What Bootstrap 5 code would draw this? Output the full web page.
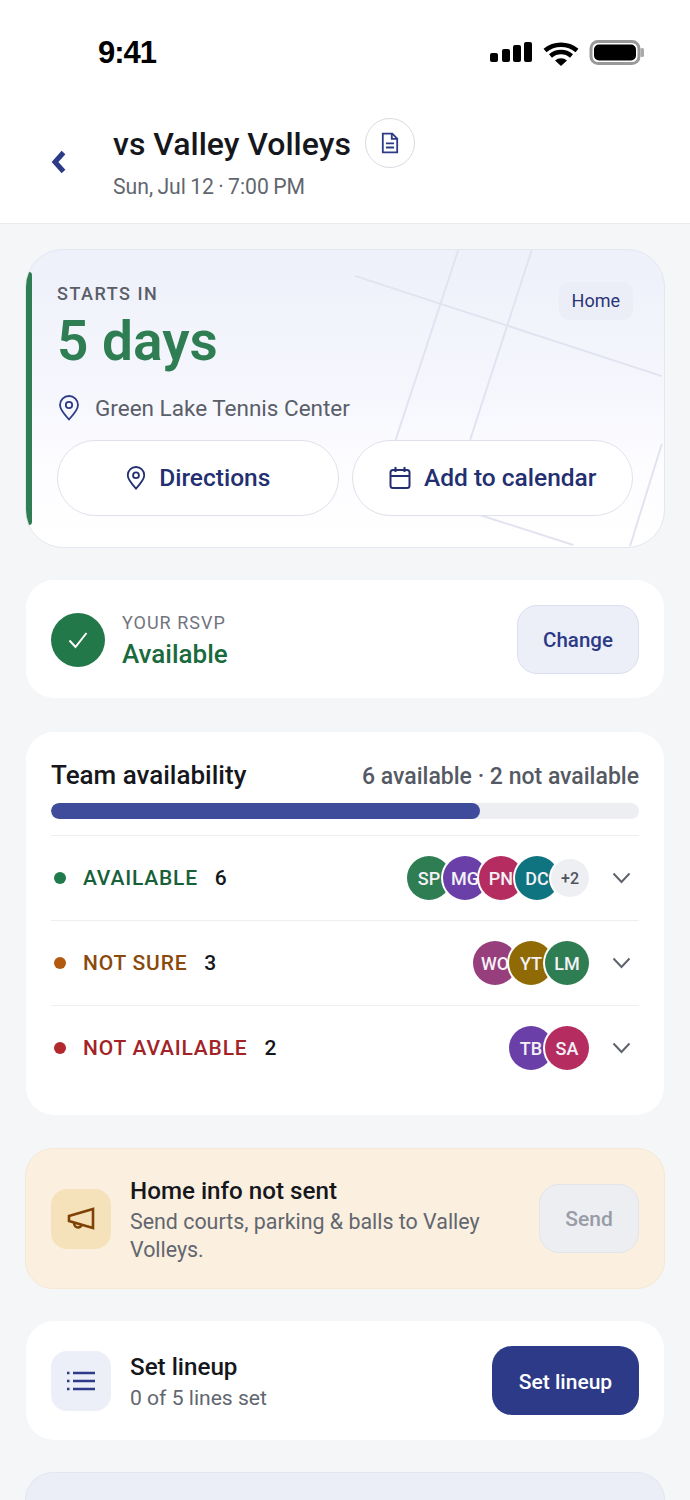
<!DOCTYPE html>
<html lang="en">
<head>
  <meta charset="UTF-8">
  <title>vs Valley Volleys</title>
  <meta name="viewport" content="width=device-width, initial-scale=1">
  <link href="https://cdn.jsdelivr.net/npm/bootstrap@5.3.3/dist/css/bootstrap.min.css" rel="stylesheet">
  <style>
    html, body { height: 1500px; overflow: hidden; }
    body { background: #f4f6f8; font-family: Roboto, "Liberation Sans", sans-serif; color: #15171c; }

    .status-bar { height: 100px; background: #fff; padding: 33px 46px 0 98px; }
    .status-time { font-family: "Liberation Sans", sans-serif; font-weight: 700; font-size: 31px; line-height: 40px; color: #000; letter-spacing: -1px; }
    .status-icons { margin-top: 7px; }

    .top-head { height: 124px; background: #fff; border-bottom: 1px solid #e9ebef; padding: 18px 0 0 51px; }
    .back-btn { width: 62px; padding-top: 31px; }
    .head-title { font-size: 32px; line-height: 50px; font-weight: 500; padding-top: 1px; }
    .head-sub { font-size: 21.200px; line-height: 26px; color: #62666f; margin-top: 5px; word-spacing: -1px; }
    .doc-btn { width: 50px; height: 50px; border: 1px solid #d9dbe1; border-radius: 50%; background: #fff; margin-left: 14px; }

    .page-main { padding: 25px 26px 0; }
    .panel { background: #fff; border: 0; border-radius: 28px; margin-bottom: 33px; }

    .hero { height: 299px; margin: 0 -1px 32px; border: 1px solid #e5e7f0; border-radius: 38px; overflow: hidden; padding: 0 31px;
      background: linear-gradient(180deg, #eef0fa 0%, #f6f7fd 50%, #fcfcff 70%, #fff 100%); }
    .hero-lines { position: absolute; left: 0; top: 0; width: 100%; height: 100%; }
    .hero-bar { position: absolute; left: 0; top: 22px; bottom: 22px; width: 6px; border-radius: 3px; background: #2f7d52; }
    .hero-inner { position: relative; }
    .hero-label { font-size: 18px; line-height: 22px; letter-spacing: 1.500px; font-weight: 500; color: #5a5e68; margin-top: 33px; }
    .hero-count { font-size: 55px; line-height: 62px; font-weight: 600; color: #2f7d52; margin-top: 5px; }
    .hero-place { font-size: 22.500px; line-height: 30px; color: #5a5e68; margin-top: 21px; gap: 14px; }
    .home-tag { position: absolute; right: 0; top: 32px; background: #eceef7; color: #2a3577; font-size: 18px; line-height: 38px; padding: 0 13px; border-radius: 10px; }
    .pill-btn { flex: 1 1 0; height: 76px; border: 1px solid #dfe1ea; border-radius: 38px; background: #fff; color: #232f70; font-size: 24.500px; font-weight: 500; gap: 12px; }
    .pill-row { gap: 13px; margin-top: 17px; }

    .rsvp { height: 118px; padding: 0 25px; margin-bottom: 34px; }
    .rsvp-check { width: 54px; height: 54px; border-radius: 50%; background: #23784a; margin: 1px 17px 0 0; }
    .rsvp-label { font-size: 18px; line-height: 24px; letter-spacing: 1px; color: #72757e; padding-top: 2px; }
    .rsvp-value { font-size: 26px; line-height: 32px; font-weight: 500; color: #1b6a3e; margin-top: 3px; }
    .soft-btn { width: 122px; height: 69px; border: 1px solid #dcdef0; border-radius: 20px; background: #eceef8; color: #2c3a86; font-size: 20.500px; font-weight: 500; padding-top: 3px; }

    .team { height: 383px; padding: 27px 25px 0; }
    .team-title { font-size: 26px; line-height: 32px; font-weight: 500; }
    .team-count { font-size: 23px; line-height: 36px; color: #555963; font-weight: 500; }
    .team-bar { height: 16px; background: #eceef2; border-radius: 8px; margin-top: 8px; margin-bottom: 16px; }
    .team-bar .progress-bar { background: #3f4c9c; border-radius: 8px; }
    .avail-row { height: 85px; border-top: 1px solid #eceef1; }
    .avail-dot { width: 12px; height: 12px; border-radius: 50%; margin: 0 17px 0 3px; }
    .avail-name { font-size: 21px; font-weight: 500; letter-spacing: .8px; padding-top: 2px; }
    .avail-num { font-size: 21px; font-weight: 500; margin-left: 17px; padding-top: 2px; }
    .avatars { margin-left: auto; }
    .avatar { width: 44px; height: 44px; border-radius: 50%; color: #f4f1f6; font-size: 18px; font-weight: 500; margin-left: -8px; box-shadow: 0 0 0 2px #fff; overflow: hidden; white-space: nowrap; padding-top: 1px; }
    .avatar-more { width: 38px; height: 38px; background: #eeeff3; color: #4e525c; font-size: 16px; }
    .chev { width: 19px; margin-left: 23px; margin-right: 8px; }

    .notice { height: 141px; margin: 0 -1px 32px; padding: 0 25px; background: #fbf0df; border: 1px solid #f5e8d4; }
    .notice-text { padding-top: 3px; }
    .lineup { height: 119px; padding: 0 25px; margin-bottom: 32px; }
    .lineup-text { padding-top: 2px; }
    .lineup-text .item-sub { font-size: 21.100px; }
    .tile { width: 60px; height: 60px; border-radius: 16px; margin-right: 19px; }
    .item-title { font-size: 24.200px; line-height: 30px; font-weight: 500; color: #15171c; }
    .item-sub { font-size: 21.400px; line-height: 28px; color: #62666f; margin-top: 2px; }
    .send-btn { width: 100px; height: 69px; border: 1px solid #e2e4e9; border-radius: 20px; background: #eceef2; color: #989ca6; font-size: 21px; font-weight: 500; padding-top: 4px; }
    .solid-btn { width: 147px; height: 69px; border: 0; border-radius: 20px; background: #2c3a88; color: #fff; font-size: 21px; font-weight: 500; padding-top: 5px; }
    .next-panel { height: 28px; margin: 0 -1px; background: #eceef7; border: 1px solid #e3e5f1; border-bottom: 0; border-radius: 28px 28px 0 0; }
  </style>
</head>
<body>

  <!-- Status bar -->
  <div class="status-bar d-flex justify-content-between align-items-start">
    <div class="status-time">9:41</div>
    <svg class="status-icons" width="154" height="26" viewBox="0 0 154 26">
      <g fill="#000">
        <rect x="0" y="13" width="8" height="9" rx="2"/>
        <rect x="12" y="9" width="8" height="13" rx="2"/>
        <rect x="23" y="5" width="8" height="17" rx="2"/>
        <rect x="34" y="2" width="8" height="20" rx="2"/>
      </g>
      <g fill="none" stroke="#000" stroke-width="4.500">
        <path d="M55 10.500a25 25 0 0 1 32 0"/>
        <path d="M60.500 16a16 16 0 0 1 21 0"/>
      </g>
      <path d="M65 20.500a9 9 0 0 1 12 0l-6 5.500z" fill="#000"/>
      <rect x="101" y="1.500" width="48" height="22" rx="7" fill="none" stroke="#999" stroke-width="3"/>
      <rect x="104" y="4.500" width="42" height="16" rx="5" fill="#000"/>
      <rect x="150.500" y="8" width="3.500" height="9" rx="1.500" fill="#aaa"/>
    </svg>
  </div>

  <!-- Header -->
  <div class="top-head d-flex">
    <div class="back-btn">
      <svg width="16" height="24" viewBox="0 0 16 24"><path d="M12.500 2.500 4 12l8.500 9.500" fill="none" stroke="#2c3a88" stroke-width="5"/></svg>
    </div>
    <div>
      <div class="d-flex align-items-start">
        <div class="head-title">vs Valley Volleys</div>
        <button class="doc-btn d-flex align-items-center justify-content-center p-0">
          <svg width="18" height="22" viewBox="0 0 20 24" fill="none" stroke="#2c3a88" stroke-width="2"><path d="M2 1.500h10.500L18 7v15.500H2z"/><path d="M12 2v5.500h6M5.500 12.500h9M5.500 17h9"/></svg>
        </button>
      </div>
      <div class="head-sub">Sun, Jul 12 · 7:00 PM</div>
    </div>
  </div>

  <div class="page-main">

    <!-- Countdown -->
    <div class="card panel hero">
      <svg class="hero-lines" viewBox="0 0 638 299" fill="none" stroke="#e2e3f0" stroke-width="2">
        <path d="M329 26 638 127M433 0 370 191M507 0 445 191M449 265 549 297M638 195 606 298"/>
      </svg>
      <div class="hero-bar"></div>
      <div class="hero-inner">
        <div class="home-tag">Home</div>
        <div class="hero-label">STARTS IN</div>
        <div class="hero-count">5 days</div>
        <div class="hero-place d-flex align-items-center">
          <svg width="24" height="26" viewBox="0 0 24 26" fill="none" stroke="#2c3a88" stroke-width="1.800"><path d="M12 24.500C6 18 3 14 3 10a9 9 0 0 1 18 0c0 4-3 8-9 14.500z"/><circle cx="12" cy="10" r="3.200"/></svg>
          <span>Green Lake Tennis Center</span>
        </div>
        <div class="pill-row d-flex">
          <button class="pill-btn d-flex align-items-center justify-content-center">
            <svg width="22" height="26" viewBox="0 0 24 26" fill="none" stroke="#232f70" stroke-width="2"><path d="M12 24.500C6 18 3 14 3 10a9 9 0 0 1 18 0c0 4-3 8-9 14.500z"/><circle cx="12" cy="10" r="3.200"/></svg>
            Directions
          </button>
          <button class="pill-btn d-flex align-items-center justify-content-center">
            <svg width="24" height="24" viewBox="0 0 24 24" fill="none" stroke="#232f70" stroke-width="2"><rect x="2.500" y="4" width="19" height="18" rx="2.500"/><path d="M2.500 10h19M7.500 1v5M16.500 1v5"/></svg>
            Add to calendar
          </button>
        </div>
      </div>
    </div>

    <!-- RSVP -->
    <div class="card panel rsvp flex-row align-items-center">
      <div class="rsvp-check d-flex align-items-center justify-content-center">
        <svg width="22" height="20" viewBox="0 0 22 20" fill="none" stroke="#fff" stroke-width="2"><path d="M2.500 10.500 8.500 17 19.500 3"/></svg>
      </div>
      <div>
        <div class="rsvp-label">YOUR RSVP</div>
        <div class="rsvp-value">Available</div>
      </div>
      <button class="soft-btn ms-auto">Change</button>
    </div>

    <!-- Team availability -->
    <div class="card panel team">
      <div class="d-flex justify-content-between">
        <div class="team-title">Team availability</div>
        <div class="team-count">6 available · 2 not available</div>
      </div>
      <div class="progress team-bar"><div class="progress-bar" style="width: 73%"></div></div>

      <div class="avail-row d-flex align-items-center">
        <span class="avail-dot" style="background:#1f7a4c"></span>
        <span class="avail-name" style="color:#17603a">AVAILABLE</span>
        <span class="avail-num">6</span>
        <div class="avatars d-flex align-items-center">
          <div class="avatar d-flex align-items-center justify-content-center" style="background:#2f7d52">SP</div>
          <div class="avatar d-flex align-items-center justify-content-center" style="background:#6b3fa8">MG</div>
          <div class="avatar d-flex align-items-center justify-content-center" style="background:#b52d60">PN</div>
          <div class="avatar d-flex align-items-center justify-content-center" style="background:#0f7480">DC</div>
          <div class="avatar avatar-more d-flex align-items-center justify-content-center">+2</div>
        </div>
        <svg class="chev" height="12" viewBox="0 0 19 12" fill="none" stroke="#5f636c" stroke-width="2"><path d="M1.500 1.500 9.500 10l8-8.500"/></svg>
      </div>

      <div class="avail-row d-flex align-items-center">
        <span class="avail-dot" style="background:#b3590f"></span>
        <span class="avail-name" style="color:#8a4a0c">NOT SURE</span>
        <span class="avail-num">3</span>
        <div class="avatars d-flex align-items-center">
          <div class="avatar d-flex align-items-center justify-content-center" style="background:#963f7c">WO</div>
          <div class="avatar d-flex align-items-center justify-content-center" style="background:#8f6a05">YT</div>
          <div class="avatar d-flex align-items-center justify-content-center" style="background:#2f7d52">LM</div>
        </div>
        <svg class="chev" height="12" viewBox="0 0 19 12" fill="none" stroke="#5f636c" stroke-width="2"><path d="M1.500 1.500 9.500 10l8-8.500"/></svg>
      </div>

      <div class="avail-row d-flex align-items-center">
        <span class="avail-dot" style="background:#b3282d"></span>
        <span class="avail-name" style="color:#a12327">NOT AVAILABLE</span>
        <span class="avail-num">2</span>
        <div class="avatars d-flex align-items-center">
          <div class="avatar d-flex align-items-center justify-content-center" style="background:#6b3fa8">TB</div>
          <div class="avatar d-flex align-items-center justify-content-center" style="background:#b52d60">SA</div>
        </div>
        <svg class="chev" height="12" viewBox="0 0 19 12" fill="none" stroke="#5f636c" stroke-width="2"><path d="M1.500 1.500 9.500 10l8-8.500"/></svg>
      </div>
    </div>

    <!-- Home info -->
    <div class="card panel notice flex-row align-items-center">
      <div class="tile d-flex align-items-center justify-content-center flex-shrink-0" style="background:#f6e2ba">
        <svg width="28" height="24" viewBox="0 0 28 24" fill="none" stroke="#7f4206" stroke-width="2.600"><path d="M26 2v19L2 14V9z"/><path d="M7 15.500c0 3 2 5 4 5s3.500-1.500 3.500-3"/></svg>
      </div>
      <div class="notice-text flex-grow-1">
        <div class="item-title">Home info not sent</div>
        <div class="item-sub">Send courts, parking &amp; balls to Valley<br>Volleys.</div>
      </div>
      <button class="send-btn flex-shrink-0">Send</button>
    </div>

    <!-- Lineup -->
    <div class="card panel lineup flex-row align-items-center">
      <div class="tile d-flex align-items-center justify-content-center flex-shrink-0" style="background:#eceef8">
        <svg width="28" height="22" viewBox="0 0 28 22" fill="none" stroke="#2c3a88" stroke-width="2.600"><path d="M6 3h22M6 11h22M6 19h22M0 3h2.500M0 11h2.500M0 19h2.500"/></svg>
      </div>
      <div class="lineup-text flex-grow-1">
        <div class="item-title">Set lineup</div>
        <div class="item-sub">0 of 5 lines set</div>
      </div>
      <button class="solid-btn flex-shrink-0">Set lineup</button>
    </div>

    <div class="card panel next-panel"></div>
  </div>

  <script src="https://cdn.jsdelivr.net/npm/bootstrap@5.3.3/dist/js/bootstrap.bundle.min.js"></script>
</body>
</html>
